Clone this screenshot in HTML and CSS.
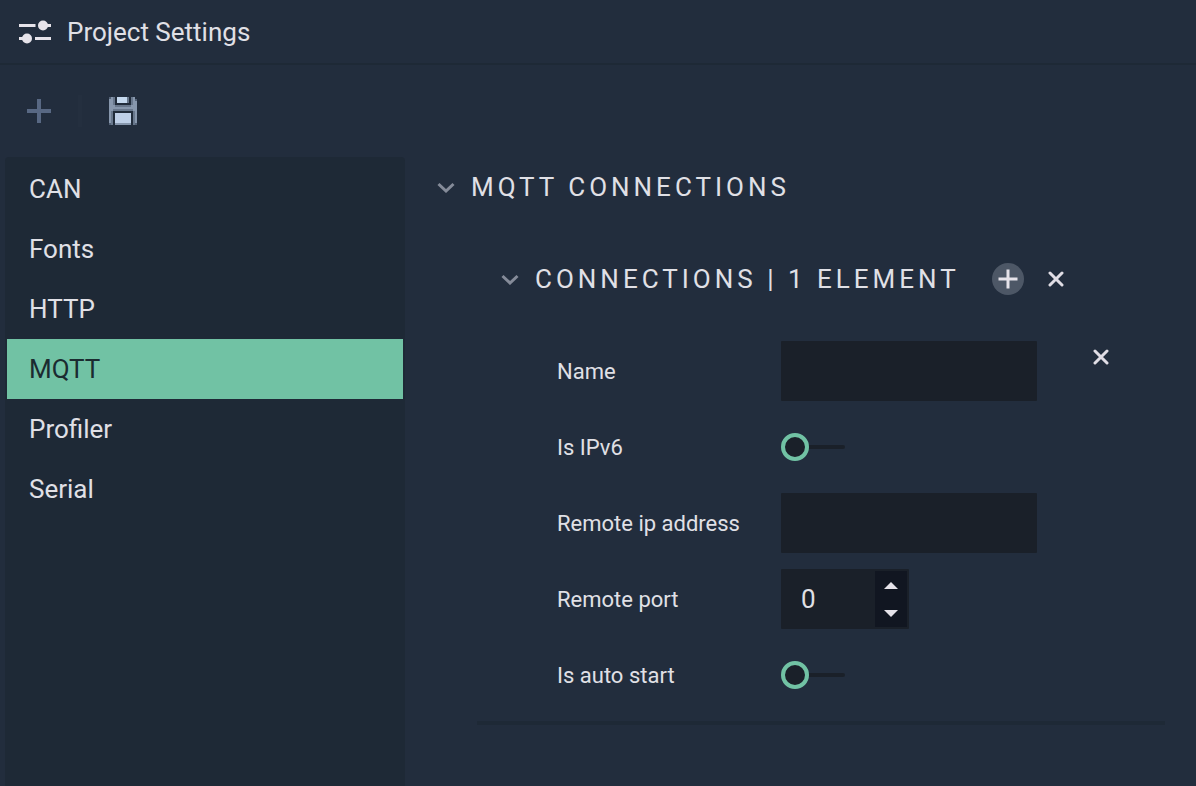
FILE: index.html
```
<!DOCTYPE html>
<html lang="en">
<head>
<meta charset="utf-8">
<title>Project Settings</title>
<link rel="stylesheet" href="styles.css">
</head>
<body>
<header class="titlebar">
  <svg class="icon" width="32" height="32" viewBox="0 0 32 32" aria-hidden="true">
    <path d="M0 9.500H16.500M24 9.500H32M0 22.500H8M16 22.500H32" stroke="#e6e3ea" stroke-width="3" fill="none"/>
    <circle cx="24" cy="9.500" r="5" fill="#e6e3ea"/>
    <circle cx="8" cy="22.500" r="5" fill="#e6e3ea"/>
  </svg>
  <h1 class="title">Project Settings</h1>
</header>
<div class="toolbar">
  <button class="icon-button" type="button" aria-label="Add">
    <svg class="icon" width="24" height="24" viewBox="0 0 24 24"><path d="M12 0V24M0 12H24" stroke="#586883" stroke-width="4"/></svg>
  </button>
  <span class="separator"></span>
  <button class="icon-button" type="button" aria-label="Save">
    <svg class="icon" width="28" height="28" viewBox="0 0 14 14" shape-rendering="crispEdges">
      <path d="M0 0H3V4H11V0H13V1H14V14H0Z" fill="#8797ad"/>
      <path d="M3 0H11V4H3Z" fill="#212c3b"/>
      <path d="M4 0H9V3H4Z" fill="#c5d9ef"/>
      <path d="M9 0H10V3H9ZM2 0H3V4H2ZM11 0H12V4H11ZM3 4H11V5H3ZM2 6H12V7H2ZM1 7H2V14H1ZM12 7H13V14H12Z" fill="#68778c"/>
      <path d="M2 7H12V14H2Z" fill="#212c3b"/>
      <path d="M3 8H11V13H3Z" fill="#bfd0e8"/>
      <path d="M3 13H11V14H3Z" fill="#8797ad"/>
      <path d="M0 0H1V1H0ZM13 1H14V2H13ZM0 13H1V14H0ZM13 13H14V14H13Z" fill="#536176"/>
    </svg>
  </button>
</div>
<div class="workspace">
  <nav class="sidebar">
    <button class="nav-item" type="button">CAN</button>
    <button class="nav-item" type="button">Fonts</button>
    <button class="nav-item" type="button">HTTP</button>
    <button class="nav-item selected" type="button" aria-current="page">MQTT</button>
    <button class="nav-item" type="button">Profiler</button>
    <button class="nav-item" type="button">Serial</button>
  </nav>
  <main class="content">
    <div class="section-head">
      <button class="icon-button" type="button" aria-label="Collapse MQTT connections">
        <svg class="icon chevron" width="18" height="12" viewBox="0 0 18 12"><path d="M1.500 3L9 10L16.500 3"/></svg>
      </button>
      <h2 class="heading">MQTT CONNECTIONS</h2>
    </div>
    <section class="group">
      <div class="section-head">
        <button class="icon-button" type="button" aria-label="Collapse connections">
          <svg class="icon chevron" width="18" height="12" viewBox="0 0 18 12"><path d="M1.500 3L9 10L16.500 3"/></svg>
        </button>
        <h3 class="heading">CONNECTIONS | 1 ELEMENT</h3>
        <div class="actions">
          <button class="icon-button round" type="button" aria-label="Add element">
            <svg class="icon" width="20" height="20" viewBox="0 0 20 20"><path d="M10 0.500V19.500M0.500 10H19.500" stroke="#e6e3ea" stroke-width="3"/></svg>
          </button>
          <button class="icon-button" type="button" aria-label="Remove all elements">
            <svg class="icon cross" width="16" height="16" viewBox="0 0 16 16"><path d="M2 2L14 14M14 2L2 14"/></svg>
          </button>
        </div>
      </div>
      <div class="element">
        <form class="form">
          <label for="name">Name</label>
          <input class="field" id="name" type="text">
          <label for="ipv6">Is IPv6</label>
          <input class="switch" id="ipv6" type="checkbox" role="switch">
          <label for="address">Remote ip address</label>
          <input class="field" id="address" type="text">
          <label for="port">Remote port</label>
          <div class="spinner">
            <input class="number" id="port" type="text" inputmode="numeric" value="0">
            <div class="steps">
              <button class="icon-button" type="button" aria-label="Increase"><svg class="icon" width="14" height="8" viewBox="0 0 14 8"><path d="M0 8L7 1L14 8Z" fill="#e6e3ea"/></svg></button>
              <button class="icon-button" type="button" aria-label="Decrease"><svg class="icon" width="14" height="8" viewBox="0 0 14 8"><path d="M0 1L7 8L14 1Z" fill="#e6e3ea"/></svg></button>
            </div>
          </div>
          <label for="autostart">Is auto start</label>
          <input class="switch" id="autostart" type="checkbox" role="switch">
        </form>
        <button class="icon-button remove" type="button" aria-label="Remove element">
          <svg class="icon cross" width="16" height="16" viewBox="0 0 16 16"><path d="M2 2L14 14M14 2L2 14"/></svg>
        </button>
      </div>
      <hr class="divider">
    </section>
  </main>
</div>
</body>
</html>
```
FILE: styles.css
```
*,
*::before,
*::after {
  box-sizing: border-box;
}

body {
  margin: 0;
  min-height: 100vh;
  display: flex;
  flex-direction: column;
  background: #222d3d;
  color: #e0e0e6;
  font-family: Roboto, "Liberation Sans", sans-serif;
  font-size: 26px;
}

button,
input {
  margin: 0;
  padding: 0;
  border: 0;
  font: inherit;
  color: inherit;
}

.icon {
  display: block;
  flex: none;
}

.icon-button {
  display: flex;
  align-items: center;
  justify-content: center;
  background: none;
}

.titlebar {
  display: flex;
  align-items: center;
  gap: 16px;
  height: 65px;
  padding-left: 19px;
  border-bottom: 2px solid #1e2936;
}

.title,
.heading {
  margin: 0;
  font-size: 26px;
  font-weight: 400;
  line-height: 32px;
}

.toolbar {
  display: flex;
  align-items: center;
  gap: 27px;
  height: 92px;
  padding-left: 27px;
}

.separator {
  width: 4px;
  height: 32px;
  background: #242f3f;
}

.workspace {
  flex: 1;
  display: flex;
  padding-left: 5px;
}

.sidebar {
  width: 400px;
  flex: none;
  padding: 2px;
  border-radius: 4px 4px 0 0;
  background: #1e2936;
}

.nav-item {
  display: block;
  width: 100%;
  height: 60px;
  padding-left: 22px;
  background: none;
  text-align: left;
}

.nav-item.selected {
  background: #71c2a4;
  color: #1b2b30;
}

.content {
  flex: 1;
  padding: 14px 31px 0 32px;
}

.section-head {
  display: flex;
  align-items: center;
  gap: 16px;
  height: 32px;
}

.heading {
  letter-spacing: 4px;
  white-space: nowrap;
}

.chevron {
  fill: none;
  stroke: #858b99;
  stroke-width: 3;
}

.cross {
  fill: none;
  stroke: #e0dde5;
  stroke-width: 3;
  stroke-linecap: round;
}

.group {
  padding: 60px 0 0 40px;
}

.group .section-head {
  padding-left: 24px;
}

.actions {
  display: flex;
  align-items: center;
  gap: 24px;
  padding-left: 16px;
}

.round {
  width: 32px;
  height: 32px;
  border-radius: 50%;
  background: #4d5766;
}

.element {
  display: flex;
  align-items: flex-start;
  gap: 56px;
  padding: 46px 0 16px 80px;
}

.form {
  display: grid;
  grid-template-columns: 208px 256px;
  grid-auto-rows: 60px;
  gap: 16px;
  align-items: center;
  font-size: 22px;
}

.field {
  width: 100%;
  height: 60px;
  padding: 0 20px;
  border-radius: 1px;
  background: #1a2029;
}

.switch {
  appearance: none;
  display: flex;
  align-items: center;
  width: 64px;
  height: 28px;
}

.switch::before {
  content: "";
  width: 28px;
  height: 28px;
  border: 4px solid #71c2a4;
  border-radius: 50%;
  background: #1a2029;
}

.switch::after {
  content: "";
  flex: 1;
  height: 4px;
  border-radius: 0 2px 2px 0;
  background: #1a2029;
}

.spinner {
  display: flex;
  width: 128px;
  height: 60px;
  padding: 2px;
  border-radius: 1px;
  background: #1a2029;
  font-size: 26px;
}

.number {
  flex: 1;
  min-width: 0;
  padding-left: 18px;
  background: none;
}

.steps {
  display: grid;
  grid-template-rows: 1fr 1fr;
  width: 32px;
  background: #111621;
}

.remove {
  margin-top: 8px;
}

.divider {
  height: 4px;
  margin: 0;
  border: 0;
  background: #1e2936;
}
```
